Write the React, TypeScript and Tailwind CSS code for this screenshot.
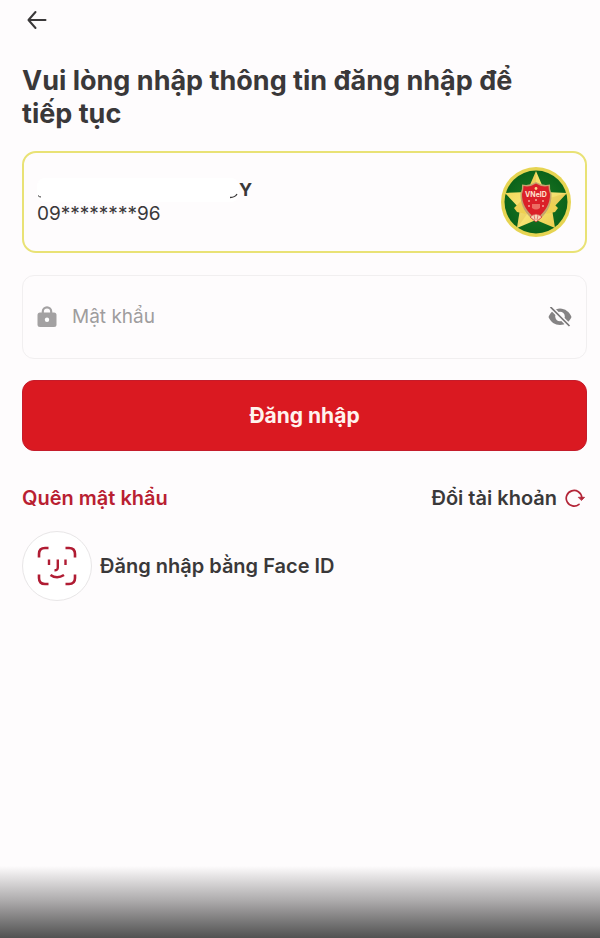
import React, { useState } from "react";

function BackIcon() {
  return (
    <svg viewBox="0 0 20 20" className="h-5 w-5" fill="none" stroke="currentColor" strokeWidth="2" strokeLinecap="round" strokeLinejoin="round">
      <path d="M18.500 10H1.500M8.500 2L1.500 10L8.500 18" />
    </svg>
  );
}

function LockIcon() {
  return (
    <svg viewBox="0 0 20 22" className="h-[22px] w-5 shrink-0" fill="none">
      <path d="M5.800 9V5.500a4.200 4.200 0 0 1 8.400 0V9" stroke="#a3a1a2" strokeWidth="2.200" />
      <rect x="0.500" y="6.500" width="19" height="14.500" rx="2.500" fill="#a3a1a2" />
      <circle cx="10" cy="13.800" r="2.200" fill="#fff" />
    </svg>
  );
}

function EyeOffIcon() {
  return (
    <svg viewBox="0 0 24 20" className="h-5 w-6" fill="none">
      <path d="M0.500 10C2.500 5 7 1.500 12 1.500S21.500 5 23.500 10C21.500 15 17 18 12 18S2.500 15 0.500 10Z" fill="#858384" />
      <circle cx="12" cy="9.500" r="4.800" fill="#fefcfd" />
      <path d="M2.500 0L21.500 19" stroke="#fefcfd" strokeWidth="4.500" />
      <path d="M2.500 0L21.500 19" stroke="#777576" strokeWidth="1.700" />
    </svg>
  );
}

function ReloadIcon() {
  return (
    <svg viewBox="0 0 20 20" className="h-5 w-5" fill="none" stroke="#b32437" strokeWidth="1.700" strokeLinecap="round" strokeLinejoin="round">
      <path d="M14 16.300A7.800 7.800 0 1 1 16.800 9.500" />
      <path d="M13.600 9.300H19.600L16.700 12.300Z" fill="#b32437" strokeWidth="0.800" />
    </svg>
  );
}

function FaceIcon() {
  return (
    <svg viewBox="0 0 40 40" className="h-10 w-10" fill="none" stroke="#b01c33" strokeWidth="2.600" strokeLinejoin="round">
      <path d="M2 11.500V8Q2 2 8 2H11.500M28.500 2H32Q38 2 38 8V11.500M38 28.500V32Q38 38 32 38H28.500M11.500 38H8Q2 38 2 32V28.500" />
      <path d="M12 13.500V19M28.500 13.500V19M20.800 13.500V21.500Q20.800 24.500 17.500 24.300" strokeWidth="2.400" />
      <path d="M13.500 29Q20 33.500 27 29" />
    </svg>
  );
}

function Emblem() {
  return (
    <svg viewBox="0 0 72 72" className="h-[72px] w-[72px] shrink-0" role="img" aria-label="VNeID">
      <defs>
        <linearGradient id="gold" x1="0" y1="0" x2="1" y2="1">
          <stop offset="0" stopColor="#efce45" />
          <stop offset="0.5" stopColor="#f9e77b" />
          <stop offset="1" stopColor="#e9c742" />
        </linearGradient>
        <radialGradient id="green">
          <stop offset="0" stopColor="#1d7a24" />
          <stop offset="1" stopColor="#0b621a" />
        </radialGradient>
      </defs>
      <circle cx="36" cy="36" r="35" fill="#e6d452" />
      <circle cx="36" cy="36" r="31.500" fill="url(#green)" />
      <path d="M36 5L45 26L67 27L52 43L55 62L36 54L17 62L20 43L5 27L27 26Z" fill="url(#gold)" />
      <path d="M36 5V36L27 26ZM67 27L36 36L52 43ZM17 62L36 36L20 43Z" fill="#cf9d28" opacity="0.200" />
      <path d="M14 42L21 35L26 48L17 46ZM58 42L51 35L46 48L55 46Z" fill="#efd052" />
      <path d="M36 16Q42 20 50 18.500Q49.500 23 51.500 28Q52 45 36 56Q20 45 20.500 28Q22.500 23 22 18.500Q30 20 36 16Z" fill="#c5a36c" />
      <path d="M36 17.500Q42 21.500 48.500 20Q48.500 24 50 28Q50.500 42 36 53Q21.500 42 22 28Q23.500 24 23.500 20Q30 21.500 36 17.500Z" fill="#db2029" />
      <text x="36" y="31" fill="#ffe3cf" fontSize="7" fontWeight="700" textAnchor="middle" fontFamily="Inter, sans-serif">VNeID</text>
      <circle cx="36" cy="22.500" r="1.400" fill="#ffd58a" />
      <path d="M28 35h2M42 35h2M35 34h2M28 40h2M42 40h2" stroke="#f4a69a" strokeWidth="1.500" />
      <path d="M32 38h8v4q-4 3-8 0Z" fill="#ed6c62" />
      <path d="M30 51Q36 45 42 51L36 56Z" fill="#f5d8bb" stroke="#d6363a" strokeWidth="0.800" />
      <path d="M34 49L35 54M38 49L37 54" stroke="#d6363a" strokeWidth="0.600" />
    </svg>
  );
}

export default function LoginPage() {
  const [password, setPassword] = useState("");
  const [visible, setVisible] = useState(false);

  const handleSubmit = (e: React.FormEvent) => {
    e.preventDefault();
    setPassword("");
  };

  return (
    <div className="flex min-h-screen flex-col bg-[#fefcfd] font-['Inter','Noto_Sans',sans-serif] text-[#3a3839]">
      <header className="flex h-10 items-center px-[27px]">
        <button type="button" aria-label="Quay lại">
          <BackIcon />
        </button>
      </header>

      <main className="flex flex-col pr-[13px] pl-[22px] pt-6">
        <h1 className="pr-8 text-[27px] leading-[33px] font-bold">Vui lòng nhập thông tin đăng nhập để tiếp tục</h1>

        <section className="mt-[21px] flex h-[102px] items-center justify-between rounded-[14px] border-2 border-[#e9e275] px-[13px]">
          <div>
            <div className="flex h-6 items-center">
              <span className="relative h-6 w-[202px] rounded-lg bg-white">
                <svg viewBox="0 0 202 24" className="absolute inset-0 h-full w-full" fill="none" stroke="#3a3839">
                  <path d="M1 17.500Q2 19 4 19" />
                  <path d="M193 19.500Q198 19.500 200 16" strokeWidth="1.300" />
                </svg>
              </span>
              <span className="text-lg leading-6 font-bold">Y</span>
            </div>
            <p className="text-[19px] leading-6">09********96</p>
          </div>
          <Emblem />
        </section>

        <form onSubmit={handleSubmit}>
          <div className="mt-[22px] flex h-[84px] items-center rounded-xl border border-[#f1eff0] px-3.5">
            <LockIcon />
            <input
              type={visible ? "text" : "password"}
              name="password"
              aria-label="Mật khẩu"
              placeholder="Mật khẩu"
              value={password}
              onChange={(e) => setPassword(e.target.value)}
              className="ml-[15px] min-w-0 flex-1 bg-transparent text-[19px] outline-none placeholder:text-[#9f9d9e]"
            />
            <button type="button" aria-label="Hiện mật khẩu" onClick={() => setVisible(!visible)}>
              <EyeOffIcon />
            </button>
          </div>
          <button type="submit" className="mt-[21px] h-[71px] w-full rounded-xl border border-[#c51c2b] bg-[#da1921] text-[21px] font-bold text-[#fff3ee]">
            Đăng nhập
          </button>
        </form>

        <div className="mt-8 flex items-center justify-between text-xl leading-[30px] font-semibold">
          <a href="#forgot" className="text-[#b91f32]">
            Quên mật khẩu
          </a>
          <button type="button" className="flex items-center gap-2 pr-0.5">
            Đổi tài khoản
            <ReloadIcon />
          </button>
        </div>

        <button type="button" className="mt-[18px] flex items-center gap-2 self-start text-xl font-semibold">
          <span className="flex h-[70px] w-[70px] items-center justify-center rounded-full border border-[#e8e6e7] bg-white">
            <FaceIcon />
          </span>
          Đăng nhập bằng Face ID
        </button>
      </main>

      <div className="mt-auto h-[72px] bg-linear-to-b from-[#fefcfd] via-[#aaa8a9] to-[#525252]" />
    </div>
  );
}
